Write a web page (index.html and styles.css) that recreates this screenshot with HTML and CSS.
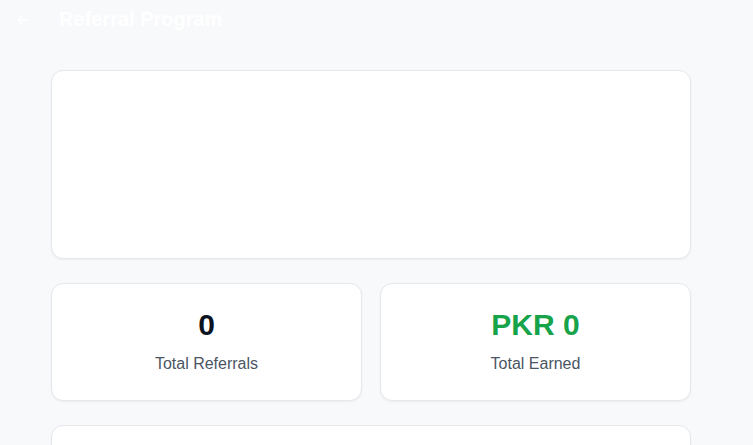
FILE: index.html
```html
<!DOCTYPE html>
<html>
<head>
<meta charset="utf-8">
<link rel="stylesheet" href="styles.css">
</head>
<body>
<header class="topbar">
  <button class="back" aria-label="Back">
    <svg width="12" height="10" viewBox="0 0 12 10" fill="none" stroke="#ffffff" stroke-width="1.3" stroke-linecap="round" stroke-linejoin="round"><path d="M11 5H1.2M5 1L1 5l4 4"/></svg>
  </button>
  <h1 class="title">Referral Program</h1>
</header>
<main class="content">
  <section class="card hero"></section>
  <div class="stats">
    <div class="card stat">
      <div class="stat-value">0</div>
      <div class="stat-label">Total Referrals</div>
    </div>
    <div class="card stat">
      <div class="stat-value green">PKR 0</div>
      <div class="stat-label">Total Earned</div>
    </div>
  </div>
  <section class="card bottom"></section>
</main>
</body>
</html>
```
FILE: styles.css
```css
* { box-sizing: border-box; }
html, body { margin: 0; padding: 0; }
body {
  background: #f8f9fb;
  font-family: "Liberation Sans", Arial, sans-serif;
  height: 445px;
  overflow: hidden;
}
.topbar {
  display: flex;
  align-items: center;
  height: 38px;
  padding: 0 0 0 16px;
}
.back {
  background: none;
  border: 0;
  padding: 0;
  width: 14px;
  height: 14px;
  display: flex;
  align-items: center;
  justify-content: center;
  margin-right: 29px;
  margin-top: 1px;
}
.title {
  margin: 0;
  color: #ffffff;
  font-size: 20px;
  line-height: 28px;
  font-weight: 700;
}
.content {
  width: 640px;
  margin: 32px 0 0 51px;
  display: flex;
  flex-direction: column;
  gap: 24px;
}
.card {
  background: #ffffff;
  border: 1px solid #e5e7eb;
  border-radius: 12px;
  box-shadow: 0 1px 2px rgba(0,0,0,0.05);
}
.hero { height: 189px; }
.stats {
  display: grid;
  grid-template-columns: 1fr 1fr;
  gap: 18px;
}
.stat {
  padding: 23px 16px 24px;
  text-align: center;
}
.stat-value {
  font-size: 30px;
  line-height: 36px;
  font-weight: 700;
  color: #0b1220;
  margin-bottom: 9px;
}
.stat-value.green { color: #16a34a; }
.stat-label {
  font-size: 16px;
  line-height: 24px;
  color: #4b5563;
}
.bottom { height: 60px; }
```
